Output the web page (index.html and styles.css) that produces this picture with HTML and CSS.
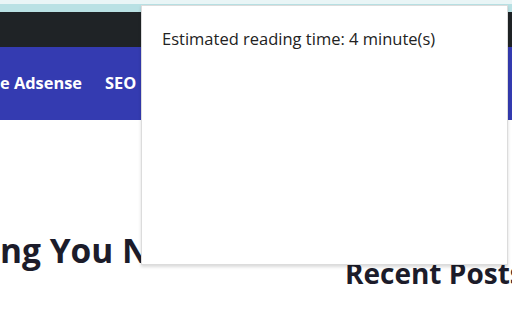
FILE: index.html
```html
<!DOCTYPE html>
<html>
<head>
<meta charset="utf-8">
<link rel="stylesheet" href="styles.css">
</head>
<body>
<div class="tabs"><div class="tabs-top"></div></div>
<div class="topbar"></div>
<nav class="nav"><span class="nav-item">e Adsense</span><span class="nav-item">SEO</span><span class="nav-item">Blogging</span></nav>
<main class="content">
  <h1 class="title">ng You Need</h1>
  <h2 class="side">Recent Posts</h2>
</main>
<div class="popup">
  <p class="popup-text">Estimated reading time: 4 minute(s)</p>
</div>
</body>
</html>
```
FILE: styles.css
```css
html, body { margin: 0; padding: 0; }
body {
  width: 512px;
  height: 320px;
  overflow: hidden;
  background: #ffffff;
  font-family: "Open Sans", "Noto Sans", sans-serif;
  position: relative;
}
.tabs { height: 12px; background: #b9e1e4; }
.tabs-top { height: 4px; background: #e9f5f6; }
.topbar { height: 35px; background: #1f2326; }
.nav {
  height: 73px;
  background: #343bb1;
  display: flex;
  align-items: center;
  gap: 23px;
  box-sizing: border-box;
  padding-bottom: 2px;
}
.nav-item {
  color: #ffffff;
  font-weight: 700;
  font-size: 16.4px;
  white-space: nowrap;
}
.content {
  display: flex;
  flex-direction: column;
  white-space: nowrap;
}
.title {
  margin: 110px 0 0 0;
  font-size: 33.5px;
  line-height: 40px;
  font-weight: 700;
  color: #1c1c2a;
}
.side {
  margin: -12px 0 0 345px;
  font-size: 28px;
  line-height: 30px;
  font-weight: 700;
  color: #1c1c2a;
}
.popup {
  position: absolute;
  left: 141px;
  top: 5px;
  width: 367px;
  height: 260px;
  background: #ffffff;
  border: 1px solid #dcdcdc;
  box-sizing: border-box;
  box-shadow: 0 2px 3px rgba(0,0,0,0.15);
}
.popup-text {
  margin: 22px 0 0 20px;
  font-size: 16.5px;
  line-height: 22px;
  color: #222222;
  white-space: nowrap;
}
```
